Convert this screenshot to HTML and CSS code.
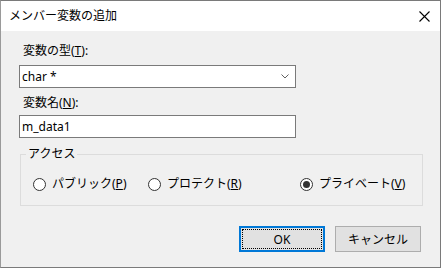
FILE: index.html
```html
<!DOCTYPE html>
<html lang="ja">
<head>
  <meta charset="UTF-8">
  <title>メンバー変数の追加</title>
  <link rel="stylesheet" href="styles.css">
</head>
<body>
  <div class="window">
    <!-- TITLE BAR -->
    <div class="titlebar">
      <span class="title">メンバー変数の追加</span>
      <svg class="close" width="11" height="11" viewBox="0 0 11 11">
        <path d="M0.5 0.5 L10.5 10.5 M10.5 0.5 L0.5 10.5" stroke="#000" stroke-width="1.1" fill="none"/>
      </svg>
    </div>

    <!-- DIALOG BODY -->
    <div class="content">
      <div class="label label-type">変数の型(<u>T</u>):</div>
      <div class="combo">
        <span>char *</span>
        <svg class="arrow" width="8" height="5" viewBox="0 0 8 5">
          <path d="M0.5 0.5 L4 4 L7.5 0.5" stroke="#606060" stroke-width="1" fill="none"/>
        </svg>
      </div>

      <div class="label label-name">変数名(<u>N</u>):</div>
      <div class="textbox">m_data1</div>

      <fieldset class="group">
        <legend>アクセス</legend>
        <div class="radios">
          <label class="radio"><span class="circle"></span><span>パブリック(<u>P</u>)</span></label>
          <label class="radio"><span class="circle"></span><span>プロテクト(<u>R</u>)</span></label>
          <label class="radio"><span class="circle checked"></span><span>プライベート(<u>V</u>)</span></label>
        </div>
      </fieldset>

      <div class="buttons">
        <button class="btn default"><span class="focus">OK</span></button>
        <button class="btn">キャンセル</button>
      </div>
    </div>
  </div>
</body>
</html>
```

FILE: styles.css
```css
body {
  margin: 0;
  font-family: "Noto Sans", "Noto Sans CJK JP", sans-serif;
  font-size: 12px;
  color: #000;
  background: #f0f0f0;
}

.window {
  width: 441px;
  height: 268px;
  box-sizing: border-box;
  border: 1px solid #7a7a7a;
  border-left-color: #9a9a9a;
  background: #f0f0f0;
  display: flex;
  flex-direction: column;
}

.titlebar {
  height: 30px;
  background: #fff;
  display: flex;
  align-items: center;
  justify-content: space-between;
  padding: 0 10px 0 8px;
}

.title {
  line-height: 16px;
}

.close {
  display: block;
}

.content {
  padding: 12px 19px 0 18px;
}

.label {
  line-height: 16px;
  padding-left: 4px;
}

.label-type {
  margin-bottom: 6px;
}

.label-name {
  margin-top: 7px;
  margin-bottom: 4px;
}

.combo, .textbox {
  width: 277px;
  height: 23px;
  box-sizing: border-box;
  border: 1px solid #7a7a7a;
  background: #fff;
  display: flex;
  align-items: center;
  padding-left: 2px;
}

.combo {
  justify-content: space-between;
  padding-right: 6px;
}

.arrow {
  display: block;
}

.group {
  margin: 8px 0 0 1px;
  padding: 0;
  width: 403px;
  height: 60px;
  box-sizing: border-box;
  border: 1px solid #dcdcdc;
}

.group legend {
  margin-left: 5px;
  padding: 0 2px;
  line-height: 16px;
}

.radios {
  display: grid;
  grid-template-columns: 115px 152px auto;
  padding: 14px 0 0 12px;
}

.radio {
  display: flex;
  align-items: center;
  gap: 6px;
  line-height: 16px;
}

.circle {
  width: 13px;
  height: 13px;
  box-sizing: border-box;
  border: 1px solid #333;
  border-radius: 50%;
  background: #fff;
  display: flex;
  align-items: center;
  justify-content: center;
}

.circle.checked::after {
  content: "";
  width: 7px;
  height: 7px;
  border-radius: 50%;
  background: #333;
}

.buttons {
  display: flex;
  justify-content: flex-end;
  gap: 10px;
  margin-top: 20px;
}

.btn {
  width: 86px;
  height: 26px;
  box-sizing: border-box;
  border: 1px solid #adadad;
  background: #e1e1e1;
  font-family: inherit;
  font-size: 12px;
  color: #000;
  padding: 0;
}

.btn.default {
  border: 2px solid #0078d7;
  padding: 1px;
}

.focus {
  display: flex;
  align-items: center;
  justify-content: center;
  height: 100%;
  box-sizing: border-box;
  border: 1px dotted #000;
}
```
